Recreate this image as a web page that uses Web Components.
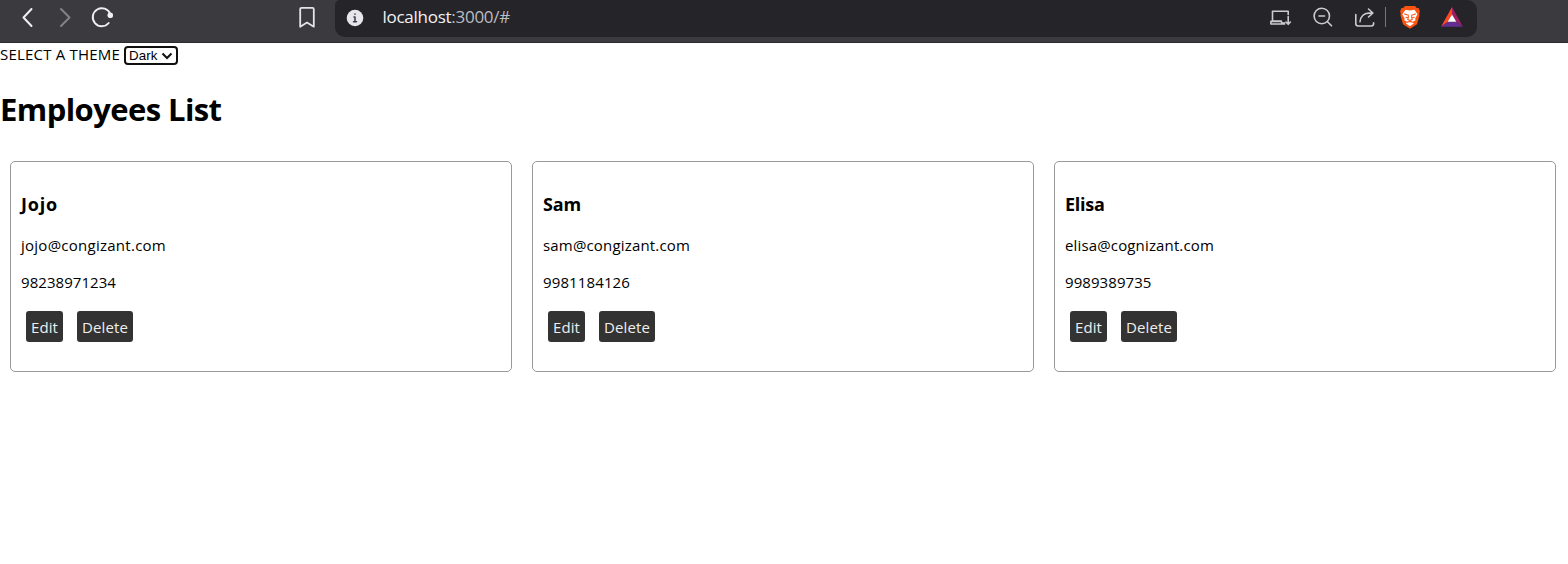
<!DOCTYPE html>
<html lang="en">
<head>
<meta charset="utf-8">
<title>Employees List</title>
<style>
body{margin:0;background:#fff;color:#000;font:15px/21px "Open Sans","Noto Sans",sans-serif}
</style>
</head>
<body>
<browser-bar></browser-bar>
<employee-app></employee-app>
<script>
const define = (name, html, setup) => customElements.define(name, class extends HTMLElement {
  constructor() {
    super();
    this.attachShadow({mode: 'open'}).innerHTML = html;
  }
  connectedCallback() { if (setup) setup(this, this.shadowRoot); }
});

// A single line of text whose tracking is adjusted to a given advance width.
define('fit-text', `<style>:host{display:inline-block;white-space:nowrap}</style><span><slot></slot></span>`, (el, root) => {
  const span = root.querySelector('span');
  const width = parseFloat(el.getAttribute('w'));
  span.style.letterSpacing = (width - span.getBoundingClientRect().width) / el.textContent.length + 'px';
});

define('browser-bar', `<style>
:host{display:flex;box-sizing:border-box;height:43px;background:#3b3a3f;border-bottom:1px solid #2b2a2f}
svg{display:block;fill:none;flex:none;stroke-linecap:round;stroke-linejoin:round}
.nav{width:335px;box-sizing:border-box;padding:5px 15px 0 15px;display:flex}
.nav svg:nth-child(n+2){margin-left:13px}
.nav svg:last-child{margin-left:auto;margin-right:1px}
.field{width:1142px;height:37px;box-sizing:border-box;background:#252428;border-radius:5px 10px 10px 10px;display:flex;align-items:flex-start;padding:5px 13px 0 8px;color:#bdbcc2;font-size:17px;line-height:24px}
.url{margin-left:15.500px}
b{font-weight:400;color:#f2f1f5}
.tools{margin-left:auto;display:flex}
.tools svg{margin-left:18px}
i{width:1px;height:20px;background:#77767b;margin:2px 0 0 8px}
.tools .lion{margin-left:12px}
</style>
<div class="nav">
<svg width="24" height="24" stroke="#f0eff2" stroke-width="2"><path d="M16.500 4 8.500 12.500 16.500 21"/></svg>
<svg width="24" height="24" stroke="#838287" stroke-width="2"><path d="M9 4l8.500 8.500L9 21"/></svg>
<svg width="24" height="24" stroke="#f0eff2" stroke-width="1.900"><path d="M21.200 9A9 9 0 1 0 19.700 18"/><circle cx="21.300" cy="10.300" r="2.800" fill="#f0eff2" stroke="none"/></svg>
<svg width="24" height="24" stroke="#e4e3e6" stroke-width="1.800"><path d="M6.600 2.900h10.800q1.400 0 1.400 1.400V21.700L12 17.600l-6.800 4.100V4.300q0-1.400 1.400-1.400z"/></svg>
</div>
<div class="field">
<svg width="24" height="24"><circle cx="12" cy="13" r="8.300" fill="#e7e6ec"/><path d="M11 12h1v4.500M10.500 16.700h3M12 9v.3" stroke="#3b3a41" stroke-width="1.500"/></svg>
<fit-text class="url" w="127.500"><b>localhost</b>:3000/#</fit-text>
<div class="tools">
<svg width="24" height="24" stroke="#cccbcf" stroke-width="1.600"><path d="M19.200 9.500V6.300H3.500v9.700h9M1.900 19v-2.800l10 .2 1.300 1.700h2.500M1.900 19h13.800M19.200 11.500v7.500M17 17l2.200 2.300 2.200-2.300"/></svg>
<svg width="24" height="24" stroke="#cccbcf" stroke-width="1.600"><circle cx="10.800" cy="11" r="7.700"/><path d="M8 11h5.600M16.500 16.800l4 4"/></svg>
<svg width="24" height="24" stroke="#cccbcf" stroke-width="1.600"><path d="M2.800 9.500v9q0 2.500 2.500 2.500h13q2.300 0 2.300-2.500v-.8M7 16.800c.4-5.300 4-8.700 8.500-8.700h4M15.500 4l4.400 4-4.400 4"/></svg>
<i></i>
<svg class="lion" width="24" height="24"><path d="M7 1h10l1.800 2 1.800-.1 1.300 3.700-.6 2 .2 2-2.500 8.700L12 23.800 5 19.300 2.500 10.600l.2-2-.6-2 1.300-3.700L5.200 3z" fill="#fb5310"/><path d="M7.500 4.800 12 5.600l4.500-.8 3 4.400-2.300 4.200.2 2.200-2.800 1.200 1.200 1.600-3.900 2.800-3.900-2.800 1.200-1.600-2.800-1.200.2-2.200-2.300-4.200z" fill="#fff"/><path d="M6.500 9l4 1.300M17.500 9l-4 1.300M7.800 12.200l2.200.3M16.200 12.200l-2.200.3M10.500 11.500l-.7 3 2.200.9 2.200-.9-.7-3M12 15.500v1.200M9.400 17.300l2.600-1.100 2.600 1.100" stroke="#fb5310" stroke-width="1.100"/></svg>
<svg width="24" height="24"><path d="M12 2v7.500L8 16.700 1 21.800z" fill="#ff4724"/><path d="M12 2l11 19.800-6.700-5.100L12 9.500z" fill="#9e1f63"/><path d="M1 21.800l7-5.100h8.300l6.700 5.100z" fill="#662d91"/><path d="M12 9.500l4.300 7.300H7.700z" fill="#fff"/></svg>
</div></div>`);

define('theme-picker', `<style>
:host{display:flex;height:22px;padding-top:1px;box-sizing:border-box}
.select{box-sizing:border-box;width:54px;height:19px;border:2px solid #101010;border-radius:4px;margin:2px 0 0 4px;padding:0 3px 0 3px;display:flex;align-items:center;font:13.333px/15px "Liberation Sans",Arial,sans-serif;outline:none}
svg{margin-left:auto}
</style><fit-text w="120">SELECT A THEME</fit-text>
<div class="select" role="combobox" tabindex="0"><fit-text w="28.500">Dark</fit-text><svg width="12" height="10" fill="none" stroke="#111" stroke-width="2"><path d="M1.500 2.500 6 7l4.500-4.500"/></svg></div>`);

define('action-button', `<style>
:host{display:block}
button{display:block;border:0;border-radius:3px;background:#333;color:#eee;font:inherit;height:31px;padding:1px 5px 0;line-height:30px}
</style><button><slot></slot></button>`);

define('employee-card', `<style>
:host{display:block;box-sizing:border-box;height:211px;margin:10px;padding:30px 10px 0;border:1px solid #999;border-radius:5px}
h3{margin:0 0 18px;font-size:18px;line-height:25px}
p{margin:0 0 16px;height:21px}
.actions{display:flex;gap:14px;margin:18px 0 0 5px}
</style><h3><slot name="name"></slot></h3><p><slot name="email"></slot></p><p><slot name="phone"></slot></p>
<div class="actions"><action-button><fit-text w="27">Edit</fit-text></action-button><action-button><fit-text w="46">Delete</fit-text></action-button></div>`);

define('employee-app', `<style>
:host{display:block}
h1{margin:23px 0 20px;font-size:31px;line-height:43px}
.list{display:grid;grid-template-columns:repeat(3,522px)}
</style><theme-picker></theme-picker>
<h1><fit-text w="221.500">Employees List</fit-text></h1>
<div class="list">
<employee-card><fit-text slot="name" w="37">Jojo</fit-text><fit-text slot="email" w="145">jojo@congizant.com</fit-text><fit-text slot="phone" w="95">98238971234</fit-text></employee-card>
<employee-card><fit-text slot="name" w="38">Sam</fit-text><fit-text slot="email" w="147">sam@congizant.com</fit-text><fit-text slot="phone" w="87">9981184126</fit-text></employee-card>
<employee-card><fit-text slot="name" w="39.500">Elisa</fit-text><fit-text slot="email" w="149">elisa@cognizant.com</fit-text><fit-text slot="phone" w="86.500">9989389735</fit-text></employee-card>
</div>`);
</script>
</body>
</html>
